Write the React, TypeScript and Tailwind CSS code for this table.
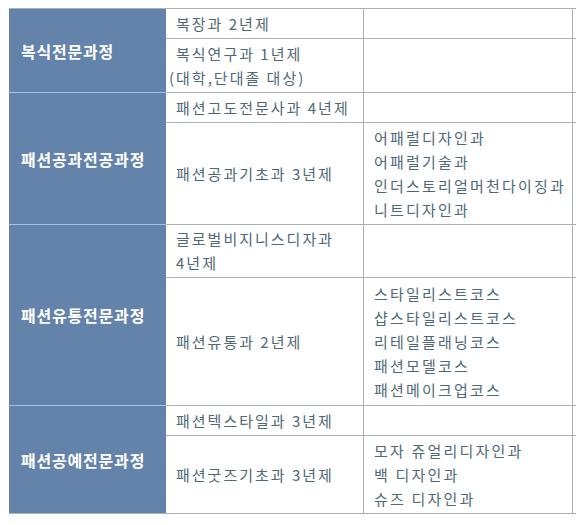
import React from "react";

type Sub = { mid: React.ReactNode; right: string[]; h: string };
type Group = { title: string; subs: Sub[] };

const groups: Group[] = [
  {
    title: "복식전문과정",
    subs: [
      { mid: <span>복장과 2년제</span>, right: [], h: "h-[30px]" },
      {
        mid: (
          <span className="flex flex-col">
            <span>복식연구과 1년제</span>
            <span className="-ml-[7px]">(대학,단대졸 대상)</span>
          </span>
        ),
        right: [],
        h: "h-[54px]",
      },
    ],
  },
  {
    title: "패션공과전공과정",
    subs: [
      { mid: <span>패션고도전문사과 4년제</span>, right: [], h: "h-[30px]" },
      {
        mid: <span>패션공과기초과 3년제</span>,
        right: ["어패럴디자인과", "어패럴기술과", "인더스토리얼머천다이징과", "니트디자인과"],
        h: "h-[102px]",
      },
    ],
  },
  {
    title: "패션유통전문과정",
    subs: [
      {
        mid: (
          <span className="flex flex-col">
            <span>글로벌비지니스디자과</span>
            <span>4년제</span>
          </span>
        ),
        right: [],
        h: "h-[53px]",
      },
      {
        mid: <span>패션유통과 2년제</span>,
        right: ["스타일리스트코스", "샵스타일리스트코스", "리테일플래닝코스", "패션모델코스", "패션메이크업코스"],
        h: "h-[128px]",
      },
    ],
  },
  {
    title: "패션공예전문과정",
    subs: [
      { mid: <span>패션텍스타일과 3년제</span>, right: [], h: "h-[30px]" },
      {
        mid: <span>패션굿즈기초과 3년제</span>,
        right: ["모자 쥬얼리디자인과", "백 디자인과", "슈즈 디자인과"],
        h: "h-[78px]",
      },
    ],
  },
];

export default function App() {
  return (
    <div
      className="w-[576px] h-[525px] overflow-hidden bg-white pt-[8px] pl-[9px]"
      style={{ fontFamily: '"Noto Sans CJK KR", "Noto Sans", sans-serif' }}
    >
      <div className="w-[700px] border-t border-[#a9b0b8]">
        {groups.map((g, gi) => (
          <div key={gi} className="flex">
            <div
              className={`w-[157px] shrink-0 bg-[#6383aa] flex items-center pl-[12px] text-white font-bold text-[16px] tracking-[0.8px] border-b ${
                gi === groups.length - 1 ? "border-[#a9b0b8]" : "border-[#a9c4e2]"
              }`}
            >
              {g.title}
            </div>
            <div className="flex flex-col">
              {g.subs.map((s, si) => (
                <div key={si} className={`flex ${s.h} border-b border-[#a9b0b8]`}>
                  <div className="w-[198px] shrink-0 border-r border-[#a9b0b8] flex items-center pl-[10px] text-[15px] leading-[24px] tracking-[2px] text-[#4f6876]">
                    {s.mid}
                  </div>
                  <div className="w-[209px] shrink-0 border-r border-[#a9b0b8] flex flex-col justify-center pl-[10px] text-[15px] leading-[24px] tracking-[2.2px] text-[#4f6876]">
                    {s.right.map((r, ri) => (
                      <span key={ri} className="whitespace-nowrap">{r}</span>
                    ))}
                  </div>
                  <div className="w-[120px] shrink-0" />
                </div>
              ))}
            </div>
          </div>
        ))}
      </div>
    </div>
  );
}
